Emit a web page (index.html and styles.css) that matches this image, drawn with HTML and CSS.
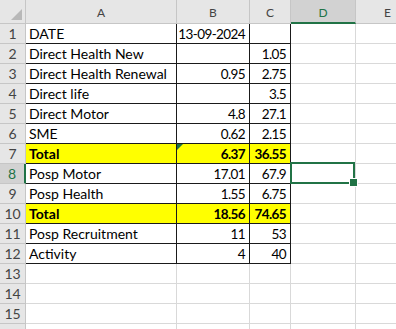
FILE: index.html
```html
<!DOCTYPE html>
<html lang="en">
<head>
  <meta charset="UTF-8">
  <title>Sheet1</title>
  <link rel="stylesheet" href="styles.css">
</head>
<body>
  <div class="sheet">
    <!-- column headers -->
    <div class="corner"></div>
    <div class="col-head">A</div>
    <div class="col-head">B</div>
    <div class="col-head">C</div>
    <div class="col-head selected">D</div>
    <div class="col-head">E</div>

    <div class="row-head">1</div>
    <div class="cell data">DATE</div>
    <div class="cell data num">13-09-2024</div>
    <div class="cell data num"></div>
    <div class="cell"></div>
    <div class="cell"></div>

    <div class="row-head">2</div>
    <div class="cell data">Direct Health New</div>
    <div class="cell data num"></div>
    <div class="cell data num">1.05</div>
    <div class="cell"></div>
    <div class="cell"></div>

    <div class="row-head">3</div>
    <div class="cell data">Direct Health Renewal</div>
    <div class="cell data num">0.95</div>
    <div class="cell data num">2.75</div>
    <div class="cell"></div>
    <div class="cell"></div>

    <div class="row-head">4</div>
    <div class="cell data">Direct life</div>
    <div class="cell data num"></div>
    <div class="cell data num">3.5</div>
    <div class="cell"></div>
    <div class="cell"></div>

    <div class="row-head">5</div>
    <div class="cell data">Direct Motor</div>
    <div class="cell data num">4.8</div>
    <div class="cell data num">27.1</div>
    <div class="cell"></div>
    <div class="cell"></div>

    <div class="row-head">6</div>
    <div class="cell data">SME</div>
    <div class="cell data num">0.62</div>
    <div class="cell data num">2.15</div>
    <div class="cell"></div>
    <div class="cell"></div>

    <div class="row-head">7</div>
    <div class="cell data total">Total</div>
    <div class="cell data total num flagged">6.37</div>
    <div class="cell data total num">36.55</div>
    <div class="cell"></div>
    <div class="cell"></div>

    <div class="row-head selected">8</div>
    <div class="cell data">Posp Motor</div>
    <div class="cell data num">17.01</div>
    <div class="cell data num">67.9</div>
    <div class="cell active"></div>
    <div class="cell"></div>

    <div class="row-head">9</div>
    <div class="cell data">Posp Health</div>
    <div class="cell data num">1.55</div>
    <div class="cell data num">6.75</div>
    <div class="cell"></div>
    <div class="cell"></div>

    <div class="row-head">10</div>
    <div class="cell data total">Total</div>
    <div class="cell data total num">18.56</div>
    <div class="cell data total num">74.65</div>
    <div class="cell"></div>
    <div class="cell"></div>

    <div class="row-head">11</div>
    <div class="cell data">Posp Recruitment</div>
    <div class="cell data num">11</div>
    <div class="cell data num">53</div>
    <div class="cell"></div>
    <div class="cell"></div>

    <div class="row-head">12</div>
    <div class="cell data">Activity</div>
    <div class="cell data num">4</div>
    <div class="cell data num">40</div>
    <div class="cell"></div>
    <div class="cell"></div>

    <div class="row-head">13</div>
    <div class="cell"></div>
    <div class="cell"></div>
    <div class="cell"></div>
    <div class="cell"></div>
    <div class="cell"></div>

    <div class="row-head">14</div>
    <div class="cell"></div>
    <div class="cell"></div>
    <div class="cell"></div>
    <div class="cell"></div>
    <div class="cell"></div>

    <div class="row-head">15</div>
    <div class="cell"></div>
    <div class="cell"></div>
    <div class="cell"></div>
    <div class="cell"></div>
    <div class="cell"></div>

    <!-- row 16 is cut off by the window edge -->
    <div class="row-head"></div>
    <div class="cell"></div>
    <div class="cell"></div>
    <div class="cell"></div>
    <div class="cell"></div>
    <div class="cell"></div>
  </div>
</body>
</html>
```

FILE: styles.css
```css
* {
  box-sizing: border-box;
}

body {
  margin: 0;
  background: white;
  overflow: hidden;
  font-family: Lato, 'Liberation Sans', sans-serif;
}

.sheet {
  display: grid;
  grid-template-columns: 26px 151px 73px 41px 65px 64px;
  grid-template-rows: 24px;
  grid-auto-rows: 20px;
}

.corner,
.col-head,
.row-head {
  background: #e6e6e6;
  color: #444;
  border-right: 1px solid #c6c6c6;
  border-bottom: 1px solid #c6c6c6;
}

.corner {
  position: relative;
}

.corner::after {
  content: '';
  position: absolute;
  right: 3px;
  bottom: 3px;
  border-style: solid;
  border-width: 0 0 11px 11px;
  border-color: transparent transparent #b8b8b8 transparent;
}

.col-head {
  font-size: 12px;
  display: flex;
  align-items: center;
  justify-content: center;
  padding-top: 2px;
}

.col-head.selected {
  background: #d2d2d2;
  color: #217346;
  border-bottom: 2px solid #217346;
}

.row-head {
  font-size: 14px;
  display: flex;
  align-items: flex-end;
  justify-content: center;
  padding-bottom: 1px;
}

.row-head.selected {
  background: #d2d2d2;
  color: #217346;
  border-right: 2px solid #217346;
}

.cell {
  border-right: 1px solid #d9d9d9;
  border-bottom: 1px solid #d9d9d9;
  font-size: 14px;
  color: #000;
  display: flex;
  align-items: flex-end;
  padding: 0 3px 1px 3px;
  white-space: nowrap;
}

.cell.data {
  border-right-color: #1a1a1a;
  border-bottom-color: #1a1a1a;
}

.cell.num {
  justify-content: flex-end;
  font-size: 13.5px;
  letter-spacing: -0.6px;
  padding-right: 4px;
}

.cell.total {
  background: #ffff00;
  font-weight: 700;
}

.cell.flagged {
  position: relative;
}

.cell.flagged::before {
  content: '';
  position: absolute;
  left: 0;
  top: 0;
  border-style: solid;
  border-width: 6px 6px 0 0;
  border-color: #1e7145 transparent transparent transparent;
}

.cell.active {
  position: relative;
}

.cell.active::before {
  content: '';
  position: absolute;
  left: -1px;
  top: -2px;
  right: 0;
  bottom: -1px;
  border: 2px solid #217346;
}

.cell.active::after {
  content: '';
  position: absolute;
  right: -3px;
  bottom: -4px;
  width: 7px;
  height: 7px;
  background: #217346;
  border: 1px solid white;
}
```
